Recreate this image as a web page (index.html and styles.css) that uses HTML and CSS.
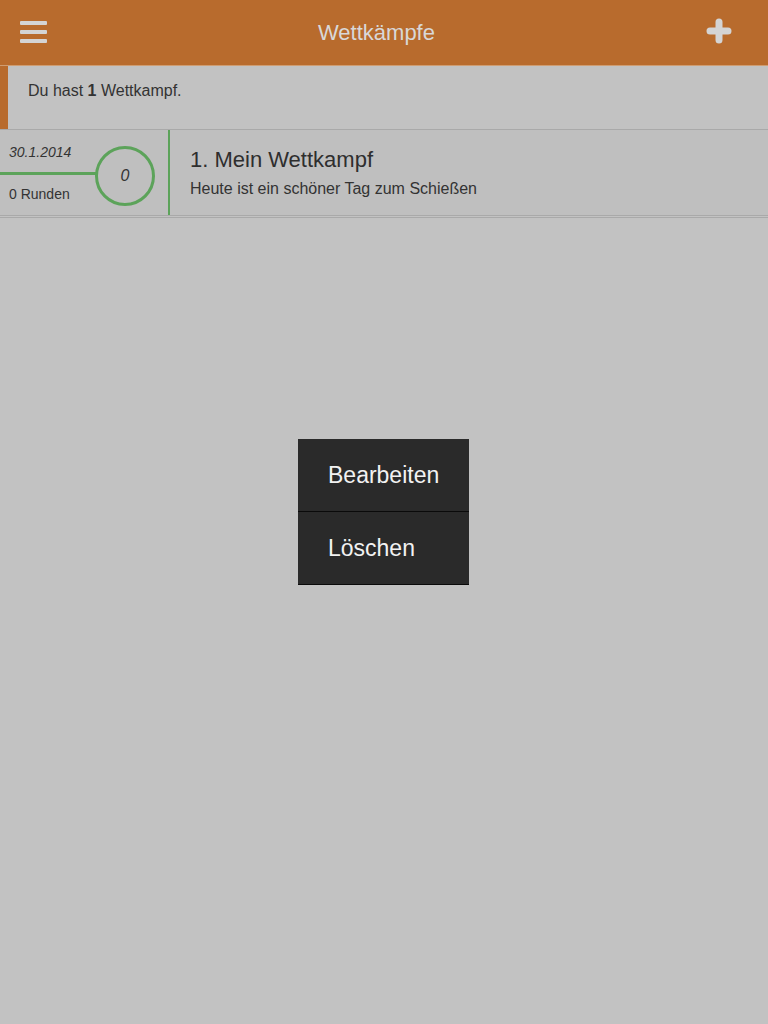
FILE: index.html
```html
<!DOCTYPE html>
<html lang="de">
<head>
<meta charset="utf-8">
<title>Wettkämpfe</title>
<link rel="stylesheet" href="styles.css">
</head>
<body>
<header class="topbar">
  <div class="menu-btn" aria-label="Menü">
    <span class="bar"></span><span class="bar"></span><span class="bar"></span>
  </div>
  <h1 class="title">Wettkämpfe</h1>
  <div class="add-btn" aria-label="Hinzufügen">
    <svg width="26" height="26" viewBox="0 0 26 26"><path d="M13 4v18M4 13h18" stroke="#d4d4d4" stroke-width="7" stroke-linecap="round" fill="none"/></svg>
  </div>
</header>
<section class="info">Du hast <b>1</b> Wettkampf.</section>
<div class="list">
  <div class="row">
    <div class="meta">
      <div class="meta-text">
        <span class="date">30.1.2014</span>
        <span class="rounds">0 Runden</span>
      </div>
      <div class="circle">0</div>
    </div>
    <div class="content">
      <div class="row-title">1. Mein Wettkampf</div>
      <div class="row-sub">Heute ist ein schöner Tag zum Schießen</div>
    </div>
  </div>
  <div class="row-end"></div>
</div>
<div class="popup">
  <div class="popup-item">Bearbeiten</div>
  <div class="popup-item">Löschen</div>
</div>
</body>
</html>
```
FILE: styles.css
```css
html, body {
  margin: 0;
  padding: 0;
}
body {
  background: #c2c2c2;
  font-family: "Liberation Sans", Arial, sans-serif;
  color: #333;
  width: 768px;
  height: 1024px;
  position: relative;
  overflow: hidden;
}
.topbar {
  height: 65px;
  background: #b86b2d;
  border-bottom: 1px solid #cf9d72;
  display: flex;
  align-items: center;
}
.menu-btn {
  margin-left: 20px;
  width: 27px;
  display: flex;
  flex-direction: column;
  gap: 5px;
  margin-top: -2px;
}
.bar {
  display: block;
  height: 4px;
  background: #d4d4d4;
  border-radius: 1px;
}
.title {
  flex: 1;
  margin: 0;
  text-align: center;
  font-size: 22px;
  font-weight: normal;
  color: #d8d8d8;
  line-height: 65px;
}
.add-btn {
  width: 26px;
  height: 26px;
  margin-right: 36px;
  margin-top: -3px;
}
.add-btn svg { display: block; }
.info {
  height: 48px;
  padding: 15px 0 0 20px;
  border-left: 8px solid #b86b2d;
  font-size: 16px;
  line-height: 20px;
  color: #333;
}
.info b { font-weight: bold; }
.list {
  border-top: 1px solid #a9a9a9;
}
.row {
  display: flex;
  height: 85px;
  background: #bfbfbf;
  border-bottom: 1px solid #a9a9a9;
}
.row-end {
  margin-top: 1px;
  border-top: 1px solid #a9a9a9;
}
.meta {
  width: 168px;
  border-right: 2px solid #5ca35a;
  display: flex;
  background-image: linear-gradient(#5ca35a, #5ca35a);
  background-repeat: no-repeat;
  background-size: 96px 3px;
  background-position: 0 42px;
}
.meta-text {
  width: 86px;
  padding: 13px 0 12px 9px;
  display: flex;
  flex-direction: column;
  justify-content: space-between;
  font-size: 14px;
  line-height: 18px;
}
.date { font-style: italic; }
.circle {
  box-sizing: border-box;
  width: 60px;
  height: 60px;
  margin-top: 16px;
  border: 3px solid #5ca35a;
  border-radius: 50%;
  display: flex;
  align-items: center;
  justify-content: center;
  font-style: italic;
  font-size: 16px;
  color: #333;
}
.content {
  padding: 17px 0 0 20px;
}
.row-title {
  font-size: 22px;
  line-height: 26px;
  color: #2e2e2e;
}
.row-sub {
  margin-top: 6px;
  font-size: 16px;
  line-height: 20px;
  color: #333;
}
.popup {
  position: absolute;
  left: 298px;
  top: 439px;
  width: 171px;
  background: #2a2a2a;
}
.popup-item {
  height: 72px;
  line-height: 72px;
  padding-left: 30px;
  font-size: 23px;
  color: #f2f2f2;
  border-bottom: 1px solid #0a0a0a;
}
```
